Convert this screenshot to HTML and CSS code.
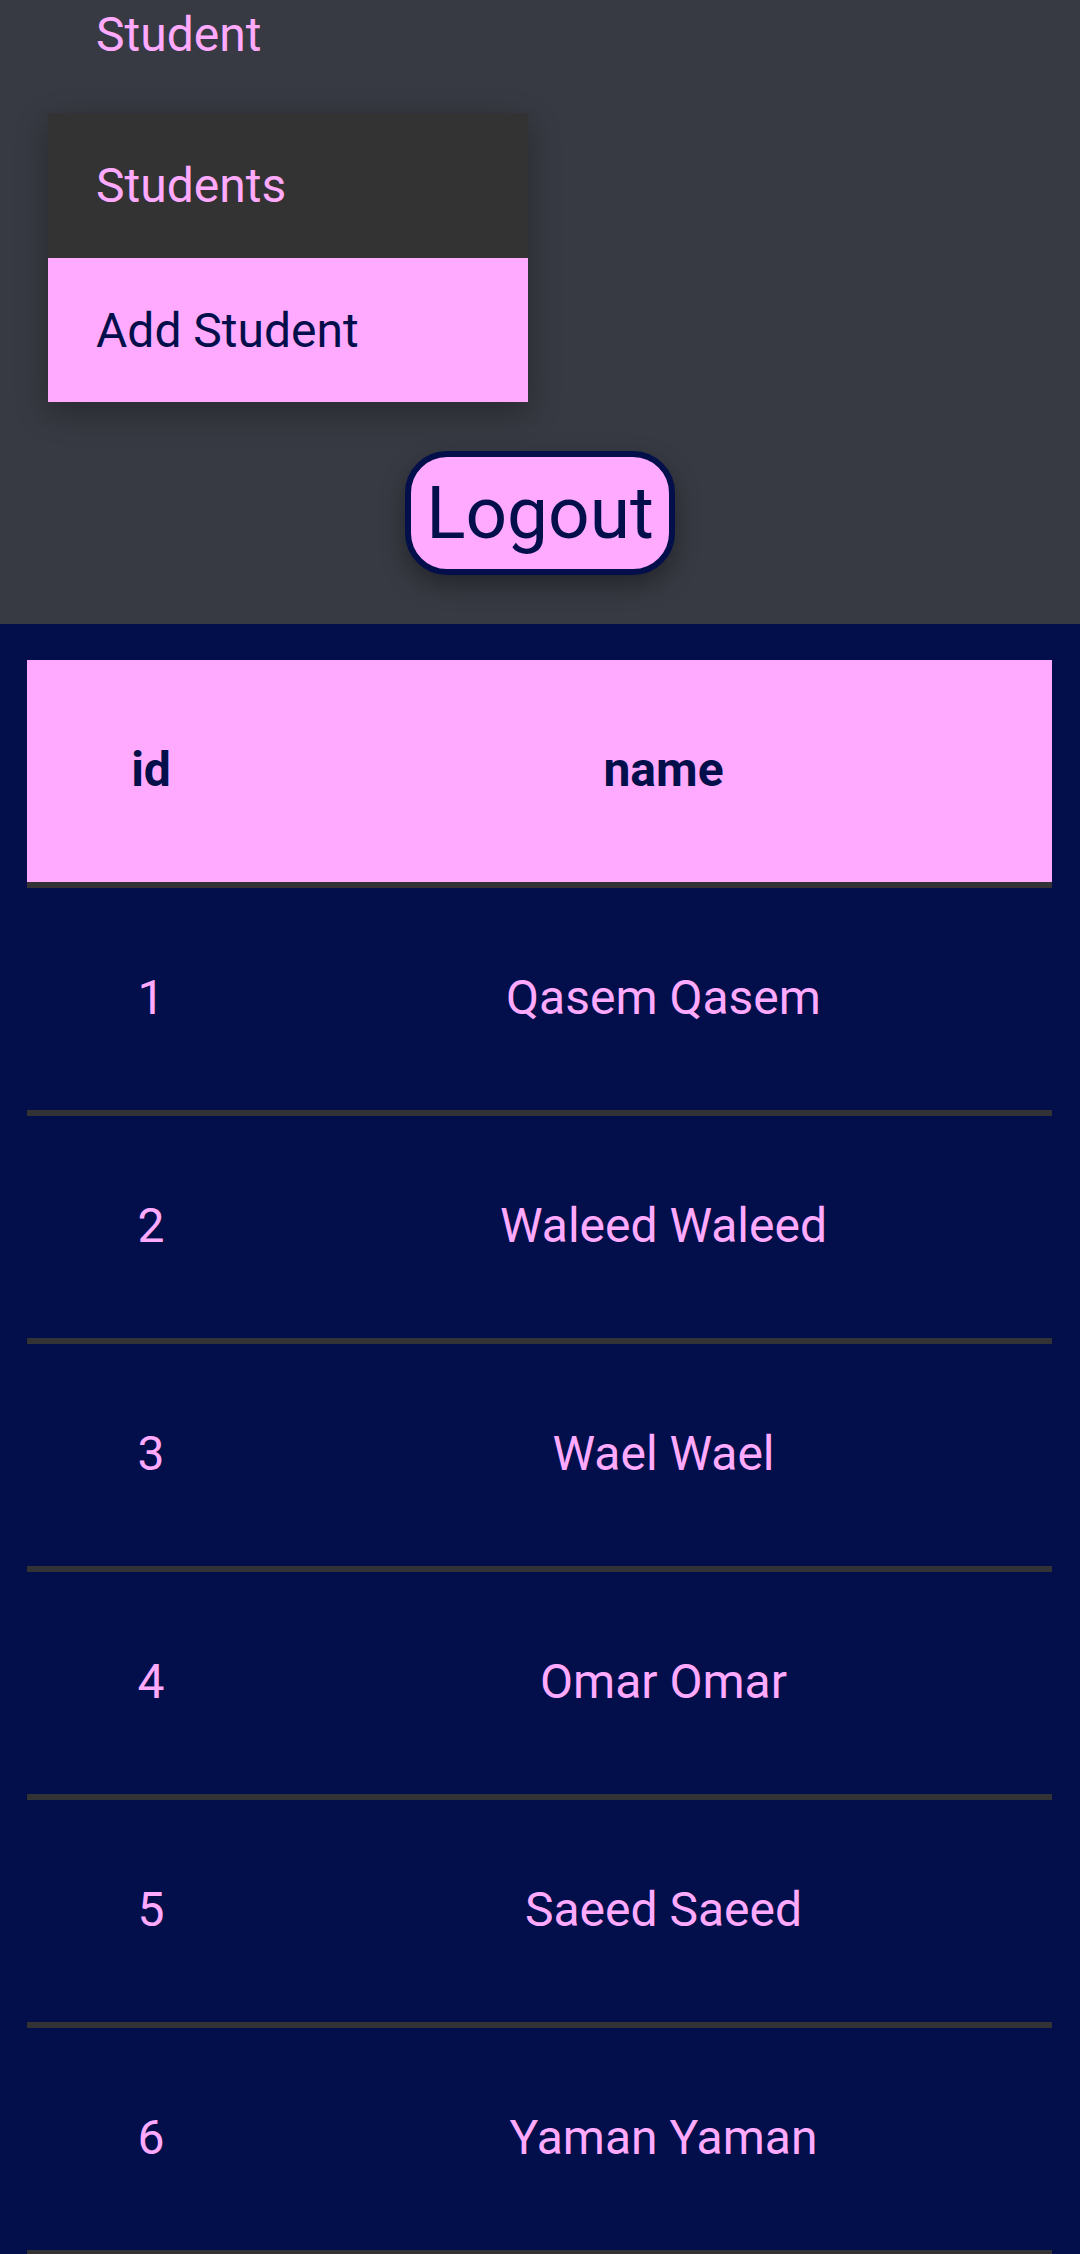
FILE: index.html
```html
<!DOCTYPE html>
<html>
<head>
<meta charset="utf-8">
<link rel="stylesheet" href="styles.css">
</head>
<body>
<div class="top">
  <div class="title">Student</div>
  <div class="menu">
    <div class="menu-item dark">Students</div>
    <div class="menu-item pink">Add Student</div>
  </div>
  <div class="btn-wrap"><button class="logout">Logout</button></div>
</div>
<div class="content">
  <table class="tbl">
    <thead>
      <tr><th class="c-id">id</th><th class="c-name">name</th></tr>
    </thead>
    <tbody>
      <tr><td>1</td><td>Qasem Qasem</td></tr>
      <tr><td>2</td><td>Waleed Waleed</td></tr>
      <tr><td>3</td><td>Wael Wael</td></tr>
      <tr><td>4</td><td>Omar Omar</td></tr>
      <tr><td>5</td><td>Saeed Saeed</td></tr>
      <tr><td>6</td><td>Yaman Yaman</td></tr>
    </tbody>
  </table>
</div>
</body>
</html>
```
FILE: styles.css
```css
html, body {
  margin: 0;
  padding: 0;
  background: #020f4b;
  font-family: Roboto, "Liberation Sans", sans-serif;
}
.top {
  background: #373a42;
  height: 624px;
  box-sizing: border-box;
  padding-top: 7px;
}
.title {
  color: #ffaaff;
  font-size: 48px;
  line-height: 56px;
  height: 56px;
  padding-left: 96px;
}
.menu {
  margin: 50px 0 0 48px;
  width: 480px;
  box-shadow: 0 10px 30px rgba(0,0,0,0.3);
}
.menu-item {
  font-size: 48px;
  padding-left: 48px;
  display: flex;
  align-items: center;
}
.menu-item.dark {
  background: #333333;
  color: #ffaaff;
  height: 145px;
}
.menu-item.pink {
  background: #ffaaff;
  color: #020f4b;
  height: 144px;
}
.btn-wrap {
  display: flex;
  justify-content: center;
  margin-top: 49px;
}
.logout {
  width: 270px;
  height: 124px;
  box-sizing: border-box;
  border: 6px solid #020f4b;
  border-radius: 42px;
  background: #ffaaff;
  color: #020f4b;
  font-family: Roboto, "Liberation Sans", sans-serif;
  font-size: 73px;
  padding: 0;
  line-height: 1;
  box-shadow: 0 10px 24px rgba(0,0,0,0.35);
}
.content {
  padding: 36px 28px 0 27px;
}
.tbl {
  width: 100%;
  border-collapse: collapse;
  font-size: 48px;
}
.tbl th {
  background: #ffaaff;
  color: #020f4b;
  font-weight: bold;
  height: 219px;
  padding: 0 0 3px 0;
  border-bottom: 6px solid #333336;
  text-align: center;
}
.c-id { width: 248px; }
.tbl td {
  color: #ffaaff;
  height: 219px;
  padding: 0 0 3px 0;
  text-align: center;
  border-bottom: 6px solid #333336;
}
```
